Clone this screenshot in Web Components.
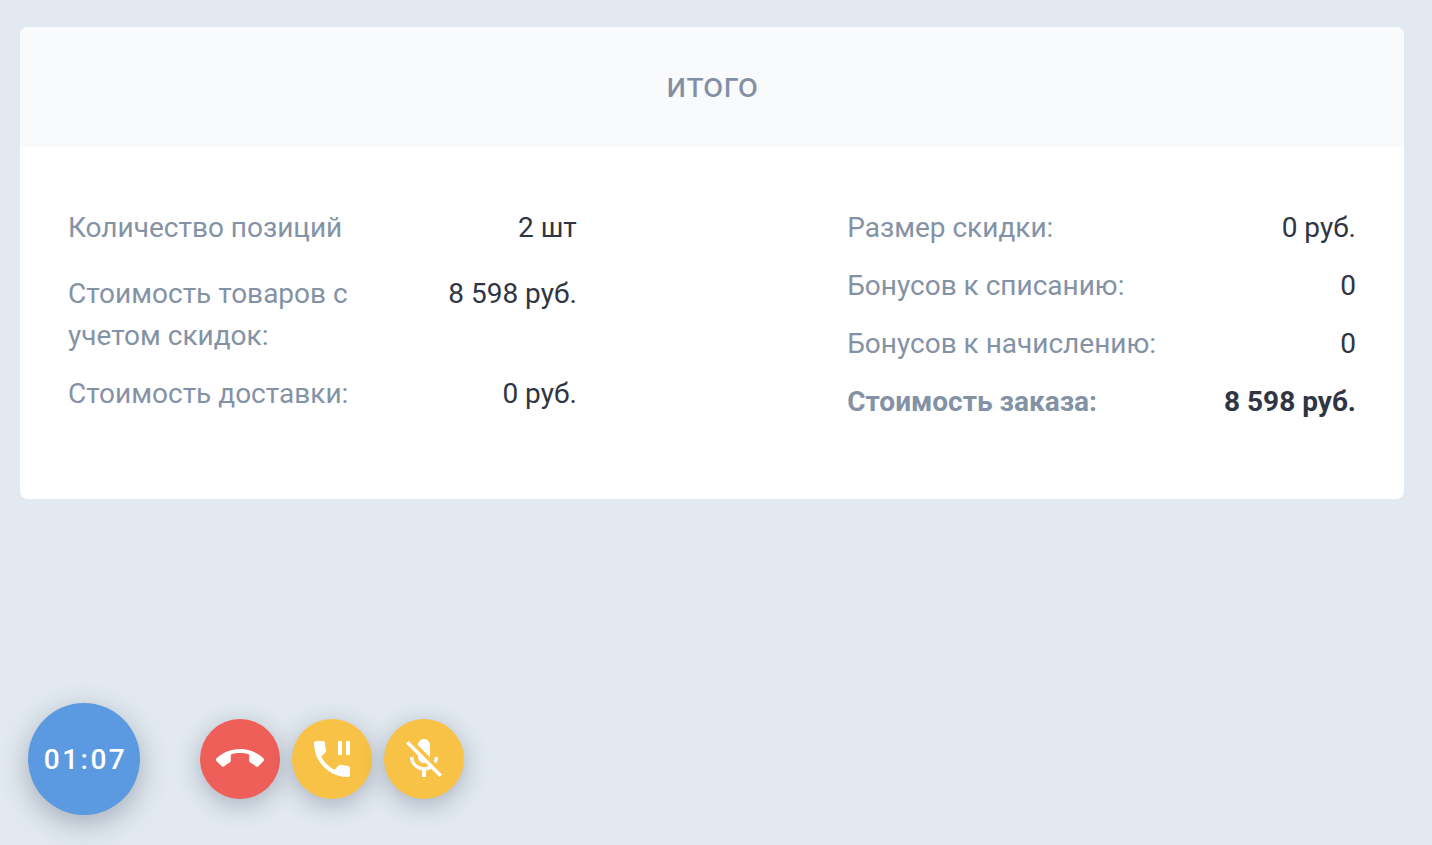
<!DOCTYPE html>
<html lang="ru">
<head>
<meta charset="utf-8">
<title>Итого</title>
<style>
  html, body { margin: 0; height: 100%; }
  body {
    background: #e2e9f0;
    font-family: Roboto, "Liberation Sans", sans-serif;
    padding: 27px 28px 0 20px;
    box-sizing: border-box;
    overflow: hidden;
  }
</style>
</head>
<body>
<summary-card heading="итого">
  <summary-list slot="left">
    <summary-row label="Количество позиций" value="2 шт"></summary-row>
    <summary-row wrapped label="Стоимость товаров с учетом скидок:" value="8 598 руб."></summary-row>
    <summary-row label="Стоимость доставки:" value="0 руб."></summary-row>
  </summary-list>
  <summary-list slot="right">
    <summary-row label="Размер скидки:" value="0 руб."></summary-row>
    <summary-row label="Бонусов к списанию:" value="0"></summary-row>
    <summary-row label="Бонусов к начислению:" value="0"></summary-row>
    <summary-row total label="Стоимость заказа:" value="8 598 руб."></summary-row>
  </summary-list>
</summary-card>

<call-bar>
  <call-timer>01:07</call-timer>
  <call-button color="#ee5f5a" icon="end"></call-button>
  <call-button color="#f7c245" icon="pause"></call-button>
  <call-button color="#f7c245" icon="mute"></call-button>
</call-bar>

<script>
//card with grey header and two columns
var template_card = document.createElement("template");
template_card.innerHTML = `
<style>
  :host { display: block; background: #fff; border-radius: 8px; overflow: hidden; }
  #head {
    height: 120px;
    box-sizing: border-box;
    padding-bottom: 4px;
    display: flex;
    align-items: center;
    justify-content: center;
    background: #f9fafc;
    color: #8290a6;
    font-size: 35.5px;
    font-weight: 400;
  }
  #body {
    display: grid;
    grid-template-columns: 508.8px 508.8px;
    justify-content: space-between;
    padding: 60px 48px 76px;
  }
</style>
<div id="head"></div>
<div id="body">
  <slot name="left"></slot>
  <slot name="right"></slot>
</div>
`;
class SummaryCard extends HTMLElement {
  constructor(){
    super();
    this.attachShadow({mode:"open"});
    this.shadowRoot.appendChild(template_card.content.cloneNode(true));
  }
  connectedCallback(){
    this.shadowRoot.querySelector("#head").textContent = this.getAttribute("heading");
  }
}
customElements.define("summary-card", SummaryCard);

var template_list = document.createElement("template");
template_list.innerHTML = `
<style>
  :host { display: flex; flex-direction: column; gap: 16px; }
</style>
<slot></slot>
`;
class SummaryList extends HTMLElement {
  constructor(){
    super();
    this.attachShadow({mode:"open"});
    this.shadowRoot.appendChild(template_list.content.cloneNode(true));
  }
}
customElements.define("summary-list", SummaryList);

var template_row = document.createElement("template");
template_row.innerHTML = `
<style>
  :host {
    display: flex;
    justify-content: space-between;
    font-size: 28px;
    line-height: 42px;
    color: #8492a6;
  }
  #label { width: 320px; }
  #value { color: #2f3542; text-align: right; white-space: nowrap; }
  :host([total]) { font-weight: 700; }
  :host([wrapped]) { margin-top: 8px; }
</style>
<span id="label"></span>
<span id="value"></span>
`;
class SummaryRow extends HTMLElement {
  constructor(){
    super();
    this.attachShadow({mode:"open"});
    this.shadowRoot.appendChild(template_row.content.cloneNode(true));
  }
  connectedCallback(){
    this.shadowRoot.querySelector("#label").textContent = this.getAttribute("label");
    this.shadowRoot.querySelector("#value").textContent = this.getAttribute("value");
  }
}
customElements.define("summary-row", SummaryRow);

var template_bar = document.createElement("template");
template_bar.innerHTML = `
<style>
  :host {
    display: flex;
    align-items: center;
    gap: 12px;
    margin: 204px 0 0 8px;
  }
  ::slotted(call-timer) { margin-right: 48px; }
</style>
<slot></slot>
`;
class CallBar extends HTMLElement {
  constructor(){
    super();
    this.attachShadow({mode:"open"});
    this.shadowRoot.appendChild(template_bar.content.cloneNode(true));
  }
}
customElements.define("call-bar", CallBar);

var template_timer = document.createElement("template");
template_timer.innerHTML = `
<style>
  :host {
    display: flex;
    align-items: center;
    justify-content: center;
    box-sizing: border-box;
    width: 112px;
    height: 112px;
    padding-left: 3px;
    border-radius: 50%;
    background: #5b9ae0;
    color: #fff;
    font-size: 28px;
    font-weight: 500;
    letter-spacing: 2.5px;
    box-shadow: 0 8px 28px rgba(50, 60, 80, .35);
  }
</style>
<slot></slot>
`;
class CallTimer extends HTMLElement {
  constructor(){
    super();
    this.attachShadow({mode:"open"});
    this.shadowRoot.appendChild(template_timer.content.cloneNode(true));
  }
}
customElements.define("call-timer", CallTimer);

//material icons, 24 box
var call_icons = {
  end: "M12 9c-1.6 0-3.15.25-4.6.72v3.1c0 .39-.23.74-.56.9-.98.49-1.87 1.12-2.66 1.85-.18.18-.43.28-.7.28-.28 0-.53-.11-.71-.29L.29 13.08c-.18-.17-.29-.42-.29-.7 0-.28.11-.53.29-.71C3.34 8.78 7.46 7 12 7s8.66 1.78 11.71 4.67c.18.18.29.43.29.71 0 .28-.11.53-.29.71l-2.48 2.48c-.18.18-.43.29-.71.29-.27 0-.52-.11-.7-.28-.79-.74-1.69-1.36-2.67-1.85-.33-.16-.56-.5-.56-.9v-3.1C15.15 9.25 13.6 9 12 9z",
  pause: "M17 3h-2v7h2V3zm3 12.5c-1.25 0-2.45-.2-3.57-.57-.35-.11-.74-.03-1.02.24l-2.2 2.2c-2.83-1.44-5.15-3.75-6.59-6.59l2.2-2.21c.28-.26.36-.65.25-1C8.7 6.45 8.5 5.25 8.5 4c0-.55-.45-1-1-1H4c-.55 0-1 .45-1 1 0 9.39 7.61 17 17 17 .55 0 1-.45 1-1v-3.5c0-.55-.45-1-1-1zM19 3v7h2V3h-2z",
  mute: "M19 11h-1.7c0 .74-.16 1.43-.43 2.05l1.23 1.23c.56-.98.9-2.09.9-3.28zm-4.02.17c0-.06.02-.11.02-.17V5c0-1.66-1.34-3-3-3S9 3.34 9 5v.18l5.98 5.99zM4.27 3L3 4.27l6.01 6.01V11c0 1.66 1.33 3 2.99 3 .22 0 .44-.03.65-.08l1.66 1.66c-.71.33-1.5.52-2.31.52-2.76 0-5.3-2.1-5.3-5.1H5c0 3.41 2.72 6.23 6 6.72V21h2v-3.28c.91-.13 1.77-.45 2.54-.9L19.73 21 21 19.73 4.27 3z"
};

var template_button = document.createElement("template");
template_button.innerHTML = `
<style>
  :host {
    display: flex;
    align-items: center;
    justify-content: center;
    width: 80px;
    height: 80px;
    border-radius: 50%;
    cursor: pointer;
    box-shadow: 0 6px 24px rgba(50, 60, 80, .32);
  }
  svg { width: 48px; height: 48px; fill: #fff; }
</style>
<svg viewBox="0 0 24 24"><path></path></svg>
`;
class CallButton extends HTMLElement {
  constructor(){
    super();
    this.attachShadow({mode:"open"});
    this.shadowRoot.appendChild(template_button.content.cloneNode(true));
  }
  connectedCallback(){
    this.style.background = this.getAttribute("color");
    this.shadowRoot.querySelector("path").setAttribute("d", call_icons[this.getAttribute("icon")]);
  }
}
customElements.define("call-button", CallButton);
</script>
</body>
</html>
